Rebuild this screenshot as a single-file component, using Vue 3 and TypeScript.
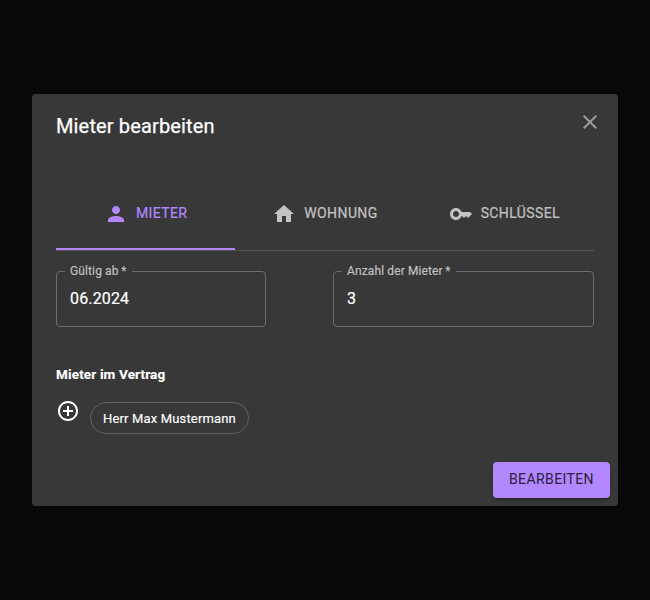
<script setup lang="ts">
import { ref } from 'vue'

interface Tab { label: string; path: string }

const tabs: Tab[] = [
  { label: 'Mieter', path: 'M12 12c2.21 0 4-1.79 4-4s-1.79-4-4-4-4 1.79-4 4 1.79 4 4 4zm0 2c-2.67 0-8 1.34-8 4v2h16v-2c0-2.66-5.33-4-8-4z' },
  { label: 'Wohnung', path: 'M10 20v-6h4v6h5v-8h3L12 3 2 12h3v8z' },
  { label: 'Schlüssel', path: 'M21 10h-8.35C11.83 7.67 9.61 6 7 6c-3.31 0-6 2.69-6 6s2.69 6 6 6c2.61 0 4.83-1.67 5.65-4H13l2 2 2-2 2 2 4-4.04L21 10zM7 15c-1.65 0-3-1.35-3-3s1.35-3 3-3 3 1.35 3 3-1.35 3-3 3z' },
]
const active = ref(0)
const validFrom = ref('06.2024')
const tenantCount = ref('3')
</script>

<template>
  <main class="backdrop">
    <section class="dialog" role="dialog">
      <header class="head">
        <h2>Mieter bearbeiten</h2>
        <button class="close" aria-label="Schließen">
          <svg viewBox="0 0 24 24"><path d="M19 6.41 17.59 5 12 10.59 6.41 5 5 6.41 10.59 12 5 17.59 6.41 19 12 13.41 17.59 19 19 17.59 13.41 12z" /></svg>
        </button>
      </header>
      <nav class="tabs">
        <button v-for="(tab, i) in tabs" :key="tab.label" class="tab" :class="{ active: active === i }" @click="active = i">
          <svg viewBox="0 0 24 24"><path :d="tab.path" /></svg>
          <span>{{ tab.label }}</span>
        </button>
      </nav>
      <div class="fields">
        <fieldset class="field">
          <legend>Gültig ab<span class="required">*</span></legend>
          <input v-model="validFrom" aria-label="Gültig ab">
        </fieldset>
        <fieldset class="field">
          <legend>Anzahl der Mieter<span class="required">*</span></legend>
          <input v-model="tenantCount" aria-label="Anzahl der Mieter">
        </fieldset>
      </div>
      <h3>Mieter im Vertrag</h3>
      <div class="people">
        <button class="add" aria-label="Hinzufügen">
          <svg viewBox="0 0 24 24"><path d="M13 7h-2v4H7v2h4v4h2v-4h4v-2h-4V7zm-1-5C6.48 2 2 6.48 2 12s4.48 10 10 10 10-4.48 10-10S17.52 2 12 2zm0 18c-4.41 0-8-3.59-8-8s3.59-8 8-8 8 3.59 8 8-3.59 8-8 8z" /></svg>
        </button>
        <span class="chip">Herr Max Mustermann</span>
      </div>
      <footer class="actions"><button class="submit">Bearbeiten</button></footer>
    </section>
  </main>
</template>

<style>
body { background: #080808; }
</style>

<style scoped>
* { box-sizing: border-box; }
.backdrop { height: 600px; padding: 94px 32px; background: #080808; color: #fff; font-family: Roboto, sans-serif; }
button { border: 0; padding: 0; background: none; color: inherit; font: inherit; }
svg { display: block; width: 24px; height: 24px; fill: currentColor; flex: none; }
.dialog { display: flex; flex-direction: column; height: 412px; border-radius: 4px; background: #383838; }
.head { display: flex; justify-content: space-between; height: 82px; padding: 16px 16px 0 24px; }
h2 { margin: 0; font-size: 20px; font-weight: 400; line-height: 32px; letter-spacing: .15px; -webkit-text-stroke: .25px currentColor; }
.close { height: 24px; color: #9e9e9e; }
.tabs { display: grid; grid-template-columns: repeat(3, 1fr); height: 75px; margin: 0 24px; border-bottom: 1px solid #545454; }
.tab { display: flex; align-items: center; justify-content: center; gap: 8px; height: 74px; padding-top: 4px; border-bottom: 2px solid transparent; color: #c3c3c3; font-size: 14px; font-weight: 400; line-height: 17.5px; letter-spacing: .4px; text-transform: uppercase; }
.tab span { -webkit-text-stroke: .2px currentColor; }
.tab.active { color: #b388ff; border-color: #b388ff; }
.fields { display: grid; grid-template-columns: 210px 261px; justify-content: space-between; margin: 13px 24px 0; }
.field { height: 63px; min-width: 0; margin: 0; padding: 0 13px; border: 1px solid #6d6d6d; border-radius: 4px; }
legend { margin-left: -5px; padding: 0 5.5px 0 5px; font-size: 12px; line-height: 14px; letter-spacing: .12px; color: #c3c3c3; -webkit-text-stroke: .15px currentColor; }
.required { margin-left: 2.5px; }
input { display: block; width: 100%; height: 24px; margin-top: 9px; padding: 0; border: 0; outline: 0; background: transparent; color: #fff; font: 16px/24px Roboto, sans-serif; letter-spacing: .15px; -webkit-text-stroke: .2px currentColor; }
h3 { margin: 38px 24px 0; font-size: 13.5px; font-weight: 700; line-height: 18px; letter-spacing: .15px; -webkit-text-stroke: .15px currentColor; }
.people { display: flex; gap: 10px; height: 51px; margin: 16px 24px 0; }
.chip { height: 32px; margin-top: 3px; padding: 0 12px; border: 1px solid #616161; border-radius: 16px; font-size: 13px; line-height: 31px; letter-spacing: .16px; -webkit-text-stroke: .15px currentColor; }
.add { height: 24px; }
.actions { display: flex; justify-content: flex-end; margin-top: auto; padding: 8px; }
.submit { height: 36px; padding: 0 16px 2px; border-radius: 4px; background: #b388ff; color: #2a2038; font-size: 14px; letter-spacing: .4px; text-transform: uppercase; box-shadow: 0 3px 1px -2px #0003, 0 2px 2px #00000024, 0 1px 5px #0000001f; }
</style>
